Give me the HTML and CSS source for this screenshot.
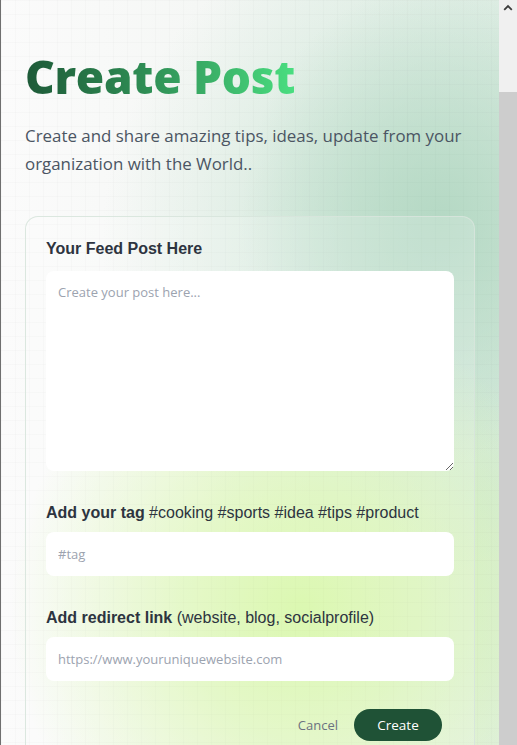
FILE: index.html
```html
<!DOCTYPE html>
<html lang="en">
<head>
<meta charset="utf-8">
<title>Create Post</title>
<link rel="stylesheet" href="styles.css">
</head>
<body>
<div class="window">
  <main class="page">
    <h1 class="title">Create Post</h1>
    <p class="subtitle">Create and share amazing tips, ideas, update from your organization with the World..</p>
    <form class="card">
      <label class="field">
        <span class="label"><b>Your Feed Post Here</b></span>
        <textarea class="textarea" placeholder="Create your post here..."></textarea>
      </label>
      <label class="field">
        <span class="label"><b>Add your tag</b> #cooking #sports #idea #tips #product</span>
        <input class="input" type="text" placeholder="#tag">
      </label>
      <label class="field">
        <span class="label"><b>Add redirect link</b> (website, blog, socialprofile)</span>
        <input class="input" type="text" placeholder="https://www.youruniquewebsite.com">
      </label>
      <div class="actions">
        <button type="button" class="btn-cancel">Cancel</button>
        <button type="button" class="btn-create">Create</button>
      </div>
    </form>
  </main>
  <div class="scrollbar">
    <div class="track">
      <svg class="arrow" width="10" height="7" viewBox="0 0 10 7"><path d="M1.2 5.8 L5 2 L8.8 5.8" fill="none" stroke="#3c3c3c" stroke-width="1.8"/></svg>
    </div>
    <div class="thumb"></div>
  </div>
</div>
</body>
</html>
```
FILE: styles.css
```css
* { box-sizing: border-box; }
html, body { margin: 0; padding: 0; height: 745px; overflow: hidden; }
body {
  font-family: "Open Sans", "Noto Sans", sans-serif;
  background: #f6f7f6;
}
.window {
  display: flex;
  height: 745px;
  border-left: 1px solid #6f6f6f;
}
.page {
  flex: 1;
  position: relative;
  padding: 44px 25px 0 24px;
  overflow: hidden;
  background:
    radial-gradient(ellipse 290px 300px at 300px 610px, rgba(212,247,160,1), rgba(214,247,165,0.7) 40%, rgba(214,247,160,0) 100%),
    radial-gradient(ellipse 200px 240px at 440px 220px, rgba(178,215,194,0.9), rgba(178,215,194,0) 100%),
    radial-gradient(ellipse 300px 330px at 400px 250px, rgba(198,227,209,0.85), rgba(198,227,209,0) 100%),
    radial-gradient(ellipse 200px 300px at 490px 500px, rgba(212,233,216,0.8), rgba(212,233,216,0) 100%),
    linear-gradient(90deg, #fbfbfb 0%, #f5f7f5 40%, #e2efe7 100%);
}
.page::before {
  content: "";
  position: absolute;
  inset: 0;
  background-image:
    linear-gradient(rgba(0,0,0,0.014) 1px, transparent 1px),
    linear-gradient(90deg, rgba(0,0,0,0.014) 1px, transparent 1px);
  background-size: 14px 14px;
  pointer-events: none;
}
.title {
  position: relative;
  margin: 0;
  font-family: "Open Sans", sans-serif;
  font-weight: 800;
  font-size: 46px;
  line-height: 64px;
  letter-spacing: -0.3px;
  background: linear-gradient(90deg, #1e5a38 0%, #2f8e55 45%, #4ade80 100%);
  -webkit-background-clip: text;
  background-clip: text;
  color: transparent;
  width: max-content;
}
.subtitle {
  position: relative;
  margin: 14px 0 0;
  font-size: 16.9px;
  line-height: 28px;
  color: #4b5563;
}
.card {
  position: relative;
  margin-top: 38px;
  width: 450px;
  border: 1px solid rgba(215,228,220,0.9);
  border-radius: 13px;
  padding: 22px 20px 30px;
  background: rgba(255,255,255,0.18);
  display: flex;
  flex-direction: column;
}
.field { display: flex; flex-direction: column; }
.field + .field { margin-top: 32px; }
.label {
  font-family: "Liberation Sans", Arial, sans-serif;
  font-size: 16px;
  line-height: 20px;
  color: #2d3440;
  margin-bottom: 9px;
}
.field:first-child .label { margin-bottom: 12px; }
.label b { font-weight: 700; }
.textarea, .input {
  font-family: "Open Sans", sans-serif;
  font-size: 13px;
  color: #333;
  border: none;
  background: #fff;
  border-radius: 8px;
  padding: 12px 12px;
  outline: none;
  width: 408px;
}
.textarea { height: 200px; resize: vertical; }
.input { height: 44px; }
.textarea::placeholder, .input::placeholder { color: #9ca3af; }
.actions {
  display: flex;
  justify-content: flex-end;
  align-items: center;
  gap: 16px;
  margin-top: 28px;
  padding-right: 12px;
}
.btn-cancel {
  font-family: "Open Sans", sans-serif;
  font-size: 13px;
  color: #6b7280;
  background: none;
  border: none;
  padding: 0;
}
.btn-create {
  font-family: "Open Sans", sans-serif;
  font-size: 13.5px;
  color: #fff;
  background: #1f5236;
  border: none;
  border-radius: 16px;
  width: 88px;
  height: 32px;
}
.scrollbar {
  width: 18px;
  display: flex;
  flex-direction: column;
  background: #f0f0f0;
}
.track {
  height: 92px;
  display: flex;
  justify-content: center;
  padding-top: 4px;
}
.arrow { display: block; }
.thumb {
  flex: 1;
  background: #cdcdcd;
}
```
